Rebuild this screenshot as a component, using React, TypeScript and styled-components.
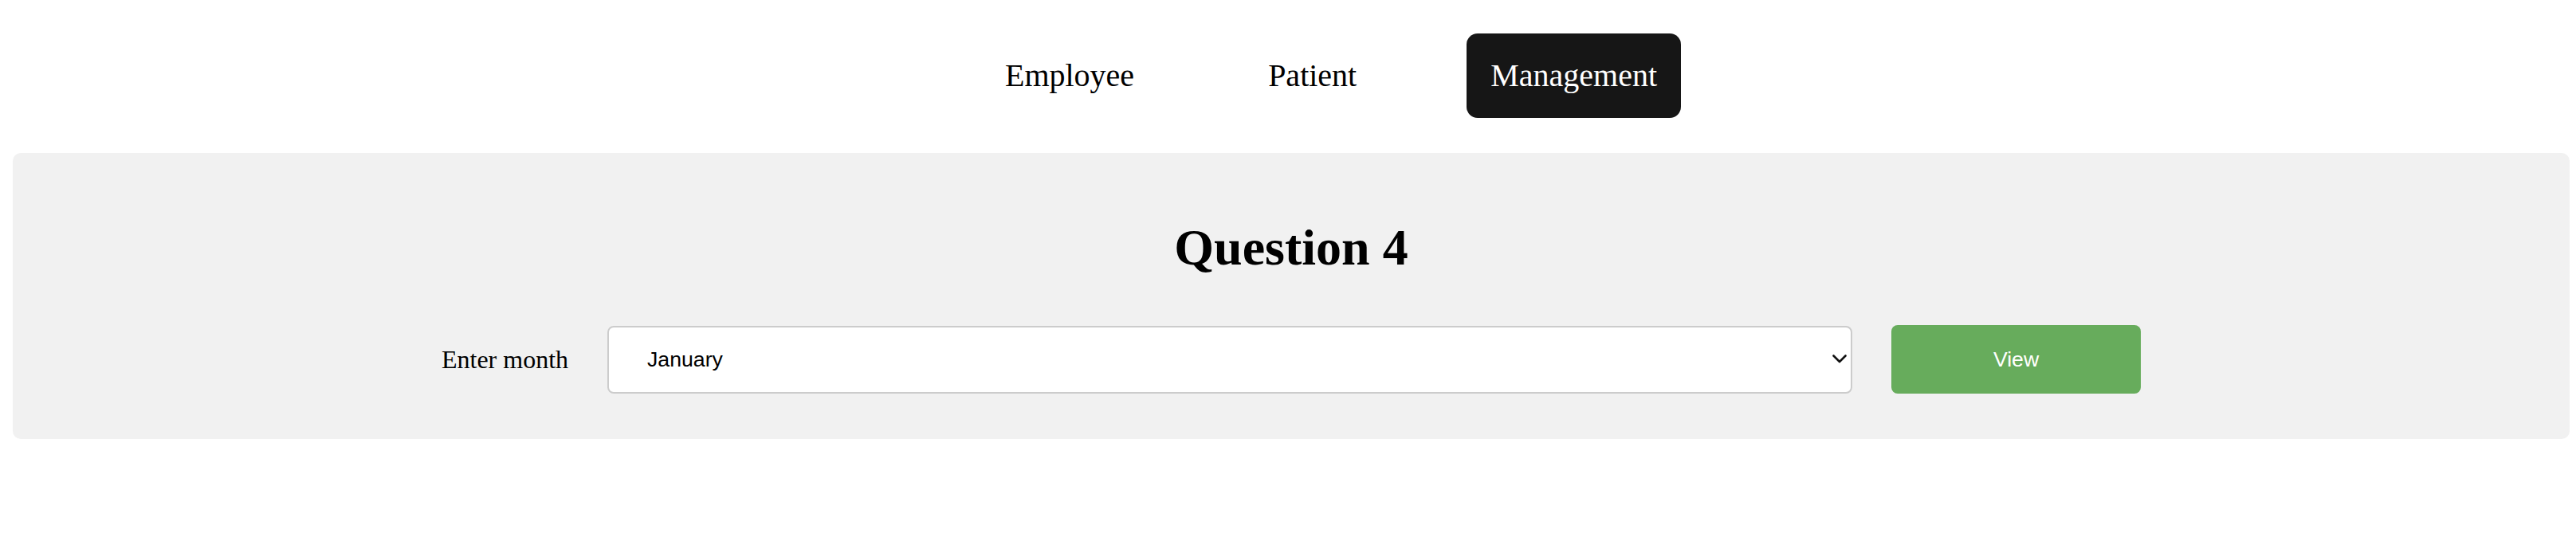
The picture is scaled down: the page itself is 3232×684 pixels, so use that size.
import React from "react";
import styled, { createGlobalStyle } from "styled-components";

const GlobalStyle = createGlobalStyle`
  html, body {
    margin: 0;
    padding: 0;
    background: #ffffff;
  }
  body {
    font-family: "Liberation Serif", "Times New Roman", serif;
    color: #000;
  }
`;

const MONTHS = [
  "January",
  "February",
  "March",
  "April",
  "May",
  "June",
  "July",
  "August",
  "September",
  "October",
  "November",
  "December",
];

const Page = styled.div`
  padding: 16px 8px 0 16px;
`;

const Nav = styled.nav`
  display: flex;
  justify-content: center;
  padding: 26px 8px 0 0;
  margin-bottom: 44px;
`;

const NavItem = styled.a<{ $active?: boolean }>`
  margin-left: 108px;
  padding: 30px;
  border-radius: 14px;
  font-size: 40px;
  line-height: 46px;
  text-decoration: none;
  cursor: pointer;
  color: ${(p) => (p.$active ? "#ffffff" : "#000000")};
  background: ${(p) => (p.$active ? "#161616" : "transparent")};
`;

const Panel = styled.section`
  background: #f1f1f1;
  border-radius: 10px;
  padding: 83px 16px 57px;
`;

const Heading = styled.h1`
  margin: 0;
  text-align: center;
  font-size: 64px;
  line-height: 71px;
  font-weight: bold;
`;

const FormRow = styled.div`
  display: flex;
  align-items: center;
  justify-content: center;
  gap: 49px;
  margin-top: 62px;
`;

const Label = styled.label`
  font-size: 32px;
  line-height: 37px;
`;

const SelectWrap = styled.div`
  position: relative;
  width: 1562px;
`;

const MonthSelect = styled.select`
  appearance: none;
  -webkit-appearance: none;
  width: 100%;
  height: 85px;
  box-sizing: border-box;
  padding: 0 40px 0 48px;
  border: 2px solid #cccccc;
  border-radius: 8px;
  background: #ffffff;
  color: #000;
  font-family: "Liberation Sans", Arial, sans-serif;
  font-size: 26.67px;
  outline: none;
`;

const Chevron = styled.svg`
  position: absolute;
  right: 7px;
  top: 50%;
  margin-top: -6px;
  width: 18px;
  height: 11px;
  pointer-events: none;
`;

const ViewButton = styled.button`
  width: 313px;
  height: 86px;
  border: none;
  border-radius: 8px;
  background: #67ac5c;
  color: #ffffff;
  font-family: "Liberation Sans", Arial, sans-serif;
  font-size: 26.67px;
  cursor: pointer;
`;

export default function App() {
  return (
    <Page>
      <GlobalStyle />
      <Nav>
        <NavItem>Employee</NavItem>
        <NavItem>Patient</NavItem>
        <NavItem $active>Management</NavItem>
      </Nav>
      <Panel>
        <Heading>Question 4</Heading>
        <FormRow>
          <Label htmlFor="month">Enter month</Label>
          <SelectWrap>
            <MonthSelect id="month" defaultValue="January">
              {MONTHS.map((m) => (
                <option key={m} value={m}>
                  {m}
                </option>
              ))}
            </MonthSelect>
            <Chevron viewBox="0 0 18 11" fill="none">
              <path
                d="M1.5 1.5 L9 9 L16.5 1.5"
                stroke="#111"
                strokeWidth="2.6"
                strokeLinecap="round"
                strokeLinejoin="round"
              />
            </Chevron>
          </SelectWrap>
          <ViewButton>View</ViewButton>
        </FormRow>
      </Panel>
    </Page>
  );
}
